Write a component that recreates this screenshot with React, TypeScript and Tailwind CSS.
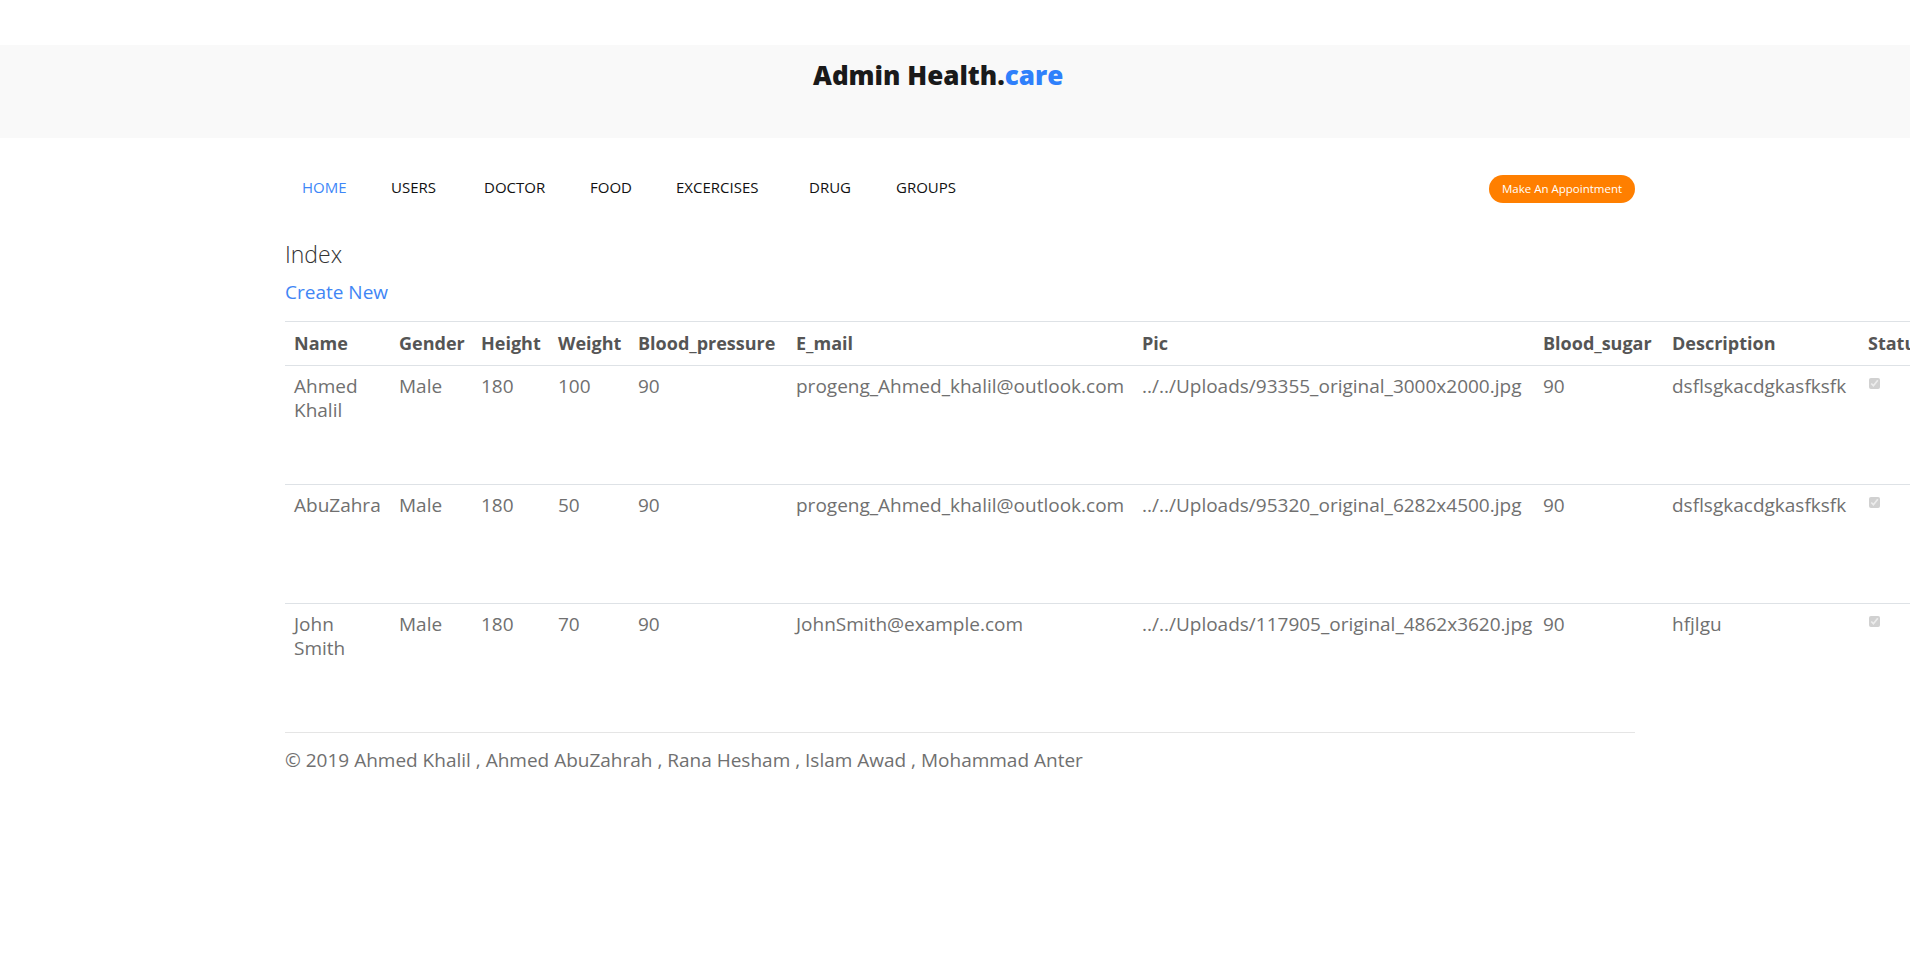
import React from "react";

const navItems: [string, string][] = [
  ["HOME", "w-[89px]"],
  ["USERS", "w-[93px]"],
  ["DOCTOR", "w-[106px]"],
  ["FOOD", "w-[86px]"],
  ["EXCERCISES", "w-[133px]"],
  ["DRUG", "w-[87px]"],
  ["GROUPS", "w-[80px]"],
];

const headers = [
  "Name",
  "Gender",
  "Height",
  "Weight",
  "Blood_pressure",
  "E_mail",
  "Pic",
  "Blood_sugar",
  "Description",
  "Status",
];

const rows = [
  {
    name: "Ahmed Khalil",
    gender: "Male",
    height: "180",
    weight: "100",
    bp: "90",
    email: "progeng_Ahmed_khalil@outlook.com",
    pic: "../../Uploads/93355_original_3000x2000.jpg",
    sugar: "90",
    desc: "dsflsgkacdgkasfksfk",
  },
  {
    name: "AbuZahra",
    gender: "Male",
    height: "180",
    weight: "50",
    bp: "90",
    email: "progeng_Ahmed_khalil@outlook.com",
    pic: "../../Uploads/95320_original_6282x4500.jpg",
    sugar: "90",
    desc: "dsflsgkacdgkasfksfk",
  },
  {
    name: "John Smith",
    gender: "Male",
    height: "180",
    weight: "70",
    bp: "90",
    email: "JohnSmith@example.com",
    pic: "../../Uploads/117905_original_4862x3620.jpg",
    sugar: "90",
    desc: "hfjlgu",
  },
];

const gridCols =
  "grid grid-cols-[106px_82px_77px_80px_158px_346px_401px_129px_196px_80px]";

export default function App() {
  return (
    <div className="w-full min-h-screen overflow-hidden bg-white font-['Open_Sans',sans-serif]">
      <div className="h-[45px]" />
      <header className="h-[93px] bg-[#f9f9f9] pt-[15px]">
        <div className="ml-[285px] w-[1350px]">
          <h1 className="pl-[528px] text-[26px] font-extrabold leading-[31px] text-[#1a1a1a]">
            Admin Health.<span className="text-[#2f80fb]">care</span>
          </h1>
        </div>
      </header>

      <main className="ml-[285px] w-[1350px]">
        <nav className="mt-[37px] flex h-[28px] items-center justify-between">
          <ul className="flex pb-[4px] pl-[17px] text-[15px] leading-[20px]">
            {navItems.map(([item, w], i) => (
              <li key={item} className={w}>
                <a className={i === 0 ? "text-[#3d87f8]" : "text-[#111]"} href="#">
                  {item}
                </a>
              </li>
            ))}
          </ul>
          <button className="h-[28px] w-[146px] rounded-full bg-[#ff7f00] text-[11.5px] leading-[28px] text-white">
            Make An Appointment
          </button>
        </nav>

        <h2 className="mt-[37px] text-[23px] font-light leading-[28px] text-[#333]">Index</h2>
        <a href="#" className="mt-[12px] block text-[19px] leading-[24px] text-[#3f86f5]">
          Create New
        </a>

        <div className="mt-[17px] w-[1660px] leading-[24px]">
          <div className={`${gridCols} h-[44px] border-t border-[#dee2e6] text-[18px]`}>
            {headers.map((h, i) => (
              <div
                key={h}
                className={`whitespace-nowrap pt-[9px] font-bold text-[#555] ${i === 0 ? "pl-[9px] pr-[8px]" : "px-[8px]"}`}
              >
                {h}
              </div>
            ))}
          </div>
          {rows.map((r) => (
            <div
              key={r.pic}
              className={`${gridCols} h-[119px] border-t border-[#dee2e6] text-[19px] text-[#707070]`}
            >
              <div className="pl-[9px] pr-[8px] pt-[8px]">{r.name}</div>
              <div className="px-[8px] pt-[8px]">{r.gender}</div>
              <div className="px-[8px] pt-[8px]">{r.height}</div>
              <div className="px-[8px] pt-[8px]">{r.weight}</div>
              <div className="px-[8px] pt-[8px]">{r.bp}</div>
              <div className="whitespace-nowrap px-[8px] pt-[8px]">{r.email}</div>
              <div className="whitespace-nowrap px-[8px] pt-[8px]">{r.pic}</div>
              <div className="px-[8px] pt-[8px]">{r.sugar}</div>
              <div className="whitespace-nowrap px-[8px] pt-[8px]">{r.desc}</div>
              <div className="pl-[9px] pt-[12px]">
                <input
                  type="checkbox"
                  checked
                  disabled
                  readOnly
                  className="m-0 block h-[11px] w-[11px]"
                />
              </div>
            </div>
          ))}
        </div>

        <hr className="mt-[10px] border-0 border-t border-[#e5e5e5]" />
        <p className="mt-[15px] text-[19px] leading-[24px] text-[#707070]">
          © 2019 Ahmed Khalil , Ahmed AbuZahrah , Rana Hesham , Islam Awad , Mohammad Anter
        </p>
      </main>
    </div>
  );
}
